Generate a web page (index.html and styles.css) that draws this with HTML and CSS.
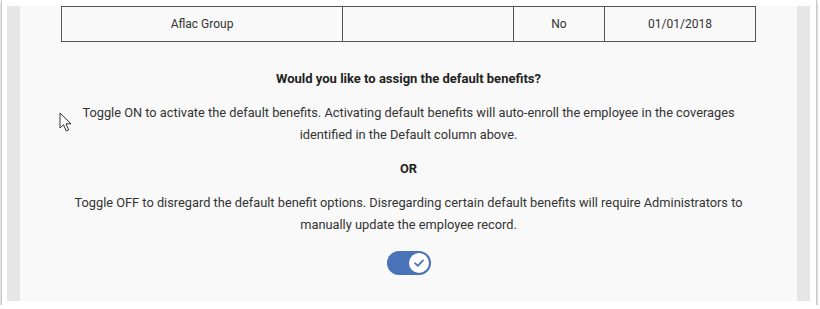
FILE: index.html
```html
<!DOCTYPE html>
<html lang="en">
<head>
    <meta charset="UTF-8" />
    <title>Default Benefits</title>
    <link rel="stylesheet" href="styles.css">
</head>
<body>
    <div class="frame">
        <div class="panel">
            <div class="gutter"></div>
            <div class="content">
                <table class="benefits">
                    <tr>
                        <td class="col-name">Aflac Group</td>
                        <td class="col-plan"></td>
                        <td class="col-default">No</td>
                        <td class="col-date">01/01/2018</td>
                    </tr>
                </table>
                <h3 class="question">Would you like to assign the default benefits?</h3>
                <p>Toggle ON to activate the default benefits. Activating default benefits will auto-enroll the employee in the coverages identified in the Default column above.</p>
                <p class="or">OR</p>
                <p>Toggle OFF to disregard the default benefit options. Disregarding certain default benefits will require Administrators to manually update the employee record.</p>
                <label class="toggle">
                    <span class="knob">
                        <svg width="12" height="10" viewBox="0 0 12 10">
                            <path d="M2 5.2 L4.8 7.8 L10 2.4" fill="none" stroke="#4a6fb5" stroke-width="1.8" stroke-linecap="round" stroke-linejoin="round"/>
                        </svg>
                    </span>
                </label>
            </div>
            <div class="gutter"></div>
        </div>
        <svg class="cursor" width="14" height="22" viewBox="0 0 14 22">
            <path d="M1 1 L1 16 L4.5 12.6 L7.2 19 L9.6 18 L7 11.8 L12 11.8 Z" fill="#fff" stroke="#333" stroke-width="1" stroke-linejoin="round"/>
        </svg>
    </div>
</body>
</html>
```

FILE: styles.css
```css
body {
    margin: 0;
    background: #fff;
    font-family: Roboto, "Liberation Sans", Arial, sans-serif;
    color: #333;
}
.frame {
    position: relative;
    width: 816px;
    height: 305px;
    margin-left: 1px;
    border-left: 1px solid #c8c8c8;
    border-right: 1px solid #c8c8c8;
    box-shadow: 0 2px 2px rgba(0, 0, 0, 0.35);
    background: #fff;
    padding: 6px 0 0 5px;
    box-sizing: border-box;
}
.panel {
    display: flex;
    height: 295px;
    width: 803px;
}
.gutter {
    width: 13px;
    background: #e6e6e6;
}
.content {
    flex: 1;
    background: #f9f9f9;
    display: flex;
    flex-direction: column;
    align-items: center;
    padding: 0 41px;
}
.benefits {
    width: 695px;
    border-collapse: collapse;
    font-size: 12px;
    color: #333;
}
.benefits td {
    border: 1px solid #555;
    height: 34px;
    padding: 0;
    text-align: center;
}
.col-name { width: 280px; }
.col-plan { width: 170px; }
.col-default { width: 90px; }
.question {
    font-size: 13px;
    font-weight: bold;
    color: #222;
    margin: 29px 0 16px;
}
.content p {
    font-size: 12.8px;
    line-height: 22px;
    text-align: center;
    margin: 0 0 12px;
}
.content p.or {
    font-weight: bold;
    color: #222;
}
.toggle {
    display: flex;
    justify-content: flex-end;
    align-items: center;
    width: 44px;
    height: 24px;
    border-radius: 12px;
    background: #4a72b8;
    margin-top: 3px;
    padding: 2px;
    box-sizing: border-box;
}
.knob {
    width: 20px;
    height: 20px;
    border-radius: 50%;
    background: #fff;
    display: flex;
    justify-content: center;
    align-items: center;
}
.cursor {
    position: absolute;
    left: 57px;
    top: 112px;
}
```
